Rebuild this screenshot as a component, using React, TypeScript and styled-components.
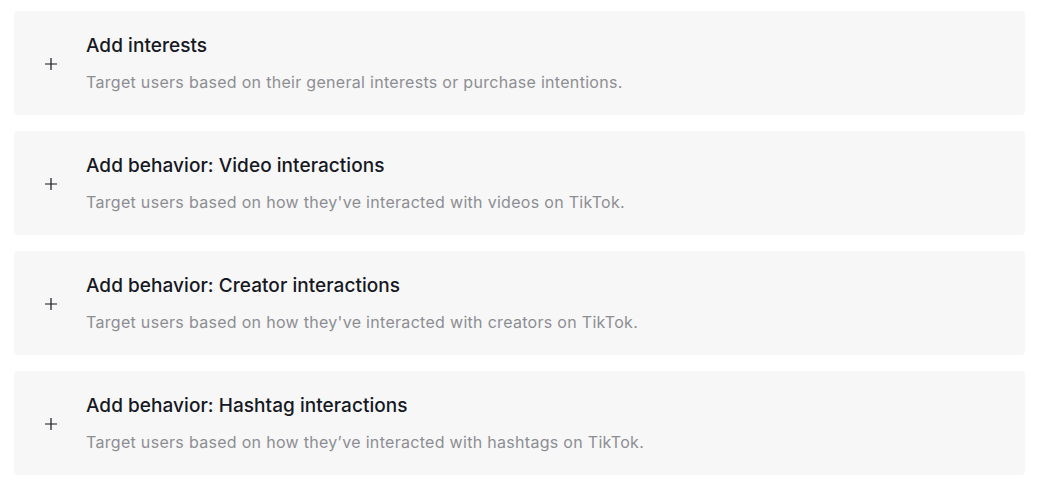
import React from "react";
import styled, { createGlobalStyle } from "styled-components";

const Global = createGlobalStyle`
  html, body { margin: 0; padding: 0; background: #ffffff; }
  body { font-family: Inter, "Liberation Sans", sans-serif; }
`;

const Page = styled.div`
  display: flex;
  flex-direction: column;
  gap: 16px;
  padding: 11px 15px 0 14px;
`;

const Card = styled.button`
  all: unset;
  box-sizing: border-box;
  display: flex;
  align-items: center;
  height: 104px;
  background: #f7f7f7;
  border-radius: 4px;
  padding-left: 31px;
  cursor: pointer;
`;

const PlusWrap = styled.span`
  display: flex;
  width: 12px;
  height: 12px;
  margin-right: 29px;
  margin-top: 1px;
  color: #161823;
`;

const Texts = styled.div`
  display: flex;
  flex-direction: column;
  gap: 13px;
  margin-top: 0px;
`;

const Title = styled.div`
  font-family: Inter, sans-serif;
  font-size: 19px;
  font-weight: 500;
  line-height: 24px;
  color: #161823;
  letter-spacing: 0.05px;
`;

const Desc = styled.div`
  font-family: Inter, sans-serif;
  font-size: 16px;
  line-height: 22px;
  color: #8d8e93;
  letter-spacing: 0.3px;
`;

const Plus = () => (
  <PlusWrap>
    <svg width="12" height="12" viewBox="0 0 12 12" fill="none">
      <path d="M6 0V12M0 6H12" stroke="currentColor" strokeWidth="1.2" />
    </svg>
  </PlusWrap>
);

const items = [
  {
    title: "Add interests",
    desc: "Target users based on their general interests or purchase intentions.",
  },
  {
    title: "Add behavior: Video interactions",
    desc: "Target users based on how they've interacted with videos on TikTok.",
  },
  {
    title: "Add behavior: Creator interactions",
    desc: "Target users based on how they've interacted with creators on TikTok.",
  },
  {
    title: "Add behavior: Hashtag interactions",
    desc: "Target users based on how they’ve interacted with hashtags on TikTok.",
  },
];

export default function App() {
  return (
    <>
      <Global />
      <Page>
        {items.map((it) => (
          <Card key={it.title}>
            <Plus />
            <Texts>
              <Title>{it.title}</Title>
              <Desc>{it.desc}</Desc>
            </Texts>
          </Card>
        ))}
      </Page>
    </>
  );
}
